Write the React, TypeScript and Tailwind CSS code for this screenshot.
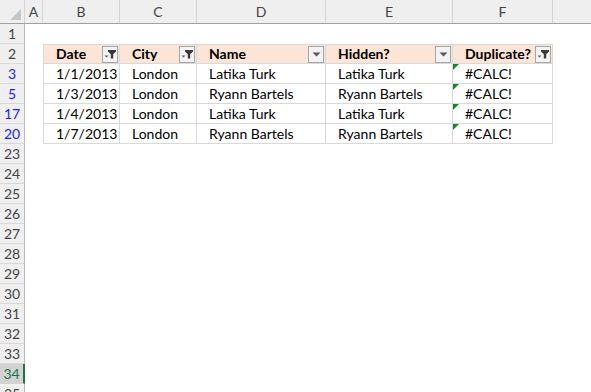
import React from "react"

const cols = [
  { key: "A", w: 18 },
  { key: "B", w: 77 },
  { key: "C", w: 77 },
  { key: "D", w: 129 },
  { key: "E", w: 127 },
  { key: "F", w: 100 },
  { key: "", w: 60 },
]

const headers = [
  { label: "Date", filtered: true },
  { label: "City", filtered: true },
  { label: "Name", filtered: false },
  { label: "Hidden?", filtered: false },
  { label: "Duplicate?", filtered: true },
]

const data = [
  { row: 3, date: "1/1/2013", city: "London", name: "Latika Turk" },
  { row: 5, date: "1/3/2013", city: "London", name: "Ryann Bartels" },
  { row: 17, date: "1/4/2013", city: "London", name: "Latika Turk" },
  { row: 20, date: "1/7/2013", city: "London", name: "Ryann Bartels" },
]

const emptyRows = [23, 24, 25, 26, 27, 28, 29, 30, 31, 32, 33, 34, 35]

function FilterButton({ filtered }: { filtered: boolean }) {
  return (
    <div className="w-[16px] h-[17px] border border-[#a6a6a6] bg-[#f3f3f3] flex items-center justify-center">
      {filtered ? (
        <svg width="12" height="10" viewBox="0 0 12 10">
          <path d="M0.5 6.5h4l-2 2z" fill="#595959" />
          <path d="M4 1h8v1.4l-2.8 2.8V9.5H6.8V5.2L4 2.4z" fill="#3a3a3a" />
        </svg>
      ) : (
        <svg width="9" height="5" viewBox="0 0 9 5">
          <path d="M0.5 0.5h8l-4 4z" fill="#595959" />
        </svg>
      )}
    </div>
  )
}

function RowLabel({ n, blue, selected }: { n: number; blue?: boolean; selected?: boolean }) {
  return (
    <div
      className={
        selected
          ? "w-[25px] h-[20px] shrink-0 bg-[#d2d2d2] border-r-2 border-r-[#217346] border-b border-b-[#d4d4d4] flex items-center justify-center text-[#217346]"
          : "w-[25px] h-[20px] shrink-0 bg-[#efefef] border-r border-r-[#bcbcbc] border-b border-b-[#d8d8d8] flex items-center justify-center " +
            (blue ? "text-[#1b1bff]" : "text-[#444444]")
      }
    >
      {n}
    </div>
  )
}

function Cell({ w, children, className = "" }: { w: number; children?: React.ReactNode; className?: string }) {
  return (
    <div style={{ width: w }} className={"h-[20px] shrink-0 flex items-center " + className}>
      {children}
    </div>
  )
}

const tableCell = "border-r border-b border-[#d9d9d9] pl-3 relative"

export default function App() {
  return (
    <div className="w-[591px] h-[392px] overflow-hidden bg-white text-[14px] leading-none font-['Lato','Liberation_Sans',sans-serif] text-black">
      {/* column headers */}
      <div className="flex h-[24px] bg-[#efefef] border-b border-[#a0a0a0] text-[#444444]">
        <div className="w-[25px] shrink-0 border-r border-[#d4d4d4] relative">
          <svg className="absolute right-[3px] bottom-[3px]" width="11" height="11" viewBox="0 0 11 11">
            <path d="M11 0v11H0z" fill="#c6c6c6" />
          </svg>
        </div>
        {cols.map((c, i) => (
          <div
            key={i}
            style={{ width: c.w }}
            className="shrink-0 border-r border-[#d4d4d4] flex items-center justify-center"
          >
            {c.key}
          </div>
        ))}
      </div>

      {/* row 1 */}
      <div className="flex">
        <RowLabel n={1} />
      </div>

      {/* row 2 – table header */}
      <div className="flex">
        <RowLabel n={2} />
        <Cell w={18} />
        {headers.map((h, i) => (
          <Cell
            key={h.label}
            w={cols[i + 1].w}
            className={
              "bg-[#fce4d6] border-t border-r border-b border-[#d9d9d9] pl-3 pr-px justify-between font-bold " +
              (i === 0 ? "border-l" : "")
            }
          >
            <span>{h.label}</span>
            <FilterButton filtered={h.filtered} />
          </Cell>
        ))}
      </div>

      {data.map((d) => (
        <div key={d.row} className="flex">
          <RowLabel n={d.row} blue />
          <Cell w={18} />
          <Cell w={77} className={tableCell + " border-l"}>{d.date}</Cell>
          <Cell w={77} className={tableCell}>{d.city}</Cell>
          <Cell w={129} className={tableCell}>{d.name}</Cell>
          <Cell w={127} className={tableCell}>{d.name}</Cell>
          <Cell w={100} className={tableCell}>
            <svg className="absolute left-0 top-0" width="6" height="6" viewBox="0 0 6 6">
              <path d="M0 0h6L0 6z" fill="#0f8a2a" />
            </svg>
            #CALC!
          </Cell>
        </div>
      ))}

      {emptyRows.map((n) => (
        <div key={n} className="flex">
          <RowLabel n={n} selected={n === 34} />
        </div>
      ))}
    </div>
  )
}
